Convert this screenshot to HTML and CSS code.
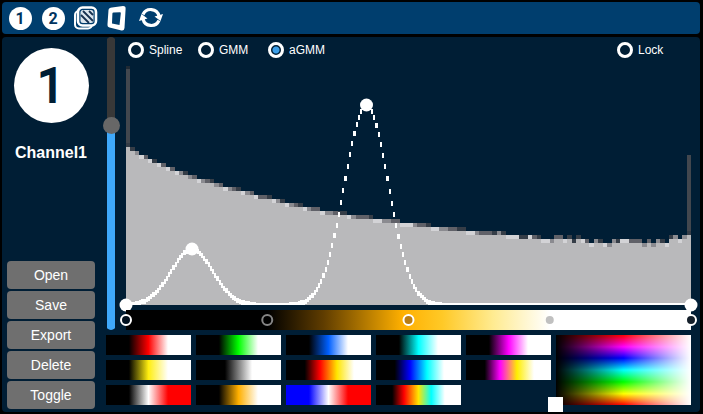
FILE: index.html
```html
<!DOCTYPE html>
<html lang="en">
<head>
<meta charset="utf-8">
<title>Transfer function editor</title>
<link rel="stylesheet" href="styles.css">
</head>
<body>
<header class="toolbar">
  <button class="tool" type="button"><span class="disc">1</span></button>
  <button class="tool" type="button"><span class="disc">2</span></button>
  <button class="tool" type="button" aria-label="Layers">
    <svg viewBox="0 0 24 24" width="24" height="24">
      <rect x="1" y="5" width="17" height="17.500" rx="4" fill="none" stroke="#fff" stroke-width="2"/>
      <rect x="4" y="1.500" width="18" height="18" rx="4.500" fill="#003c6c" stroke="#fff" stroke-width="2.600"/>
      <rect x="6.500" y="4" width="13" height="13" rx="2.500" fill="#dce5ed"/>
      <path d="M7 9L15 17M9 5L19 15M15 5L19 9" stroke="#17304f" stroke-width="1.800"/>
    </svg>
  </button>
  <button class="tool" type="button" aria-label="Clip plane">
    <svg viewBox="0 0 24 24" width="24" height="24">
      <path d="M5 1.500L16 0Q19 0 18.600 3L17.500 22Q17 25 14.500 24.500L2.500 21.500Q0.200 21 0.500 18L1.500 4Q1.800 1.700 5 1.500ZM6.500 6.500Q5.500 6.500 5.400 7.500L5 17.500L12.500 19L13.800 7.500Q14 6.300 13 6.300Z" fill="#fff" fill-rule="evenodd"/>
    </svg>
  </button>
  <button class="tool" type="button" aria-label="Refresh">
    <svg viewBox="0 0 24 24" width="24" height="24">
      <path d="M3 8.500A8.500 8.500 0 0 1 19 10M19 14.500A8.500 8.500 0 0 1 3 13" fill="none" stroke="#fff" stroke-width="3.200"/>
      <path d="M14.500 10.500L23 8L20.500 15ZM7.500 12.500L-1 15L1.500 8Z" fill="#fff"/>
    </svg>
  </button>
</header>

<main class="panel">
  <aside class="sidebar">
    <div class="badge">1</div>
    <h1 class="name">Channel1</h1>
    <div class="actions">
      <button type="button">Open</button>
      <button type="button">Save</button>
      <button type="button">Export</button>
      <button type="button">Delete</button>
      <button type="button">Toggle</button>
    </div>
  </aside>

  <section class="workspace">
    <div class="upper">
      <input class="slider" type="range" min="0" max="100" value="71" aria-label="Opacity">
      <div class="editor">
        <div class="modes">
          <label><input type="radio" name="mode">Spline</label>
          <label><input type="radio" name="mode">GMM</label>
          <label><input type="radio" name="mode" checked>aGMM</label>
          <label class="lock"><input type="checkbox">Lock</label>
        </div>
        <svg class="plot" viewBox="0 0 565 240" preserveAspectRatio="none">
          <defs><clipPath id="area"><rect width="565" height="240"/></clipPath></defs>
          <g id="bars" shape-rendering="crispEdges"></g>
          <g id="curve" fill="#fff" clip-path="url(#area)" shape-rendering="crispEdges"></g>
          <g fill="#fff">
            <circle cx="0" cy="240" r="6.500"/>
            <circle cx="66" cy="184" r="6.500"/>
            <circle cx="240.500" cy="40" r="6.500"/>
            <circle cx="565" cy="240" r="6.500"/>
          </g>
        </svg>
        <svg class="ramp" height="20">
          <defs>
            <linearGradient id="amber">
              <stop offset="0.250" stop-color="#000"/>
              <stop offset="0.350" stop-color="#603d00"/>
              <stop offset="0.490" stop-color="#ffb000"/>
              <stop offset="0.560" stop-color="#ffc927"/>
              <stop offset="0.650" stop-color="#ffeb91"/>
              <stop offset="0.750" stop-color="#fff"/>
            </linearGradient>
          </defs>
          <rect width="100%" height="20" fill="url(#amber)"/>
          <circle cx="0" cy="10" r="5" fill="#00101f" stroke="#fff" stroke-width="2"/>
          <circle cx="25%" cy="10" r="5" fill="#000" stroke="#858585" stroke-width="2"/>
          <circle cx="50%" cy="10" r="5" fill="#b97d14" stroke="#fff" stroke-width="2"/>
          <circle cx="75%" cy="10" r="4" fill="#c0c0c0"/>
          <circle cx="100%" cy="10" r="5" fill="#15202b" stroke="#fff" stroke-width="2"/>
        </svg>
      </div>
    </div>
    <div class="presets">
      <button type="button" class="red" aria-label="Red"></button>
      <button type="button" class="green" aria-label="Green"></button>
      <button type="button" class="blue" aria-label="Blue"></button>
      <button type="button" class="cyan" aria-label="Cyan"></button>
      <button type="button" class="magenta" aria-label="Magenta"></button>
      <div class="field"><span class="cursor"></span></div>
      <button type="button" class="yellow" aria-label="Yellow"></button>
      <button type="button" class="gray" aria-label="Gray"></button>
      <button type="button" class="fire" aria-label="Fire"></button>
      <button type="button" class="ice" aria-label="Ice"></button>
      <button type="button" class="plasma" aria-label="Plasma"></button>
      <button type="button" class="hot" aria-label="Gray to red"></button>
      <button type="button" class="orange" aria-label="Orange"></button>
      <button type="button" class="diverging" aria-label="Blue to red"></button>
      <button type="button" class="rainbow" aria-label="Rainbow"></button>
    </div>
  </section>
</main>
<script src="plot.js"></script>
</body>
</html>
```

FILE: styles.css
```css
* { box-sizing: border-box; }

body {
  margin: 0;
  min-height: 100vh;
  padding: 2px 3px 2px 2px;
  display: flex;
  flex-direction: column;
  gap: 3px;
  background: #000;
  color: #fff;
  font-family: "Liberation Sans", Arial, sans-serif;
}

button {
  margin: 0;
  padding: 0;
  border: 0;
  color: inherit;
  font: inherit;
}

.toolbar {
  height: 32px;
  padding: 0 6px;
  display: flex;
  align-items: center;
  gap: 9px;
  background: #003e6e;
  border-radius: 4px;
}

.tool {
  width: 24px;
  height: 24px;
  display: grid;
  place-items: center;
  background: none;
}

.tool svg {
  display: block;
  overflow: visible;
}

.disc {
  width: 23px;
  height: 23px;
  border-radius: 50%;
  background: #fff;
  color: #003460;
  font: 700 16px/24px Roboto, sans-serif;
}

.panel {
  flex: 1;
  display: flex;
  gap: 11px;
  padding: 0 9px 3px 5px;
  background: #001e35;
  border-radius: 4px;
}

.sidebar {
  width: 88px;
  display: flex;
  flex-direction: column;
}

.badge {
  width: 75px;
  height: 75px;
  margin: 11px auto 0;
  border-radius: 50%;
  background: #fff;
  color: #001e35;
  font: 400 48px/75px Roboto, sans-serif;
  -webkit-text-stroke: 2px #001e35;
  text-align: center;
}

.name {
  margin: 20px 0 0;
  font-size: 16px;
  line-height: 20px;
  text-align: center;
}

.actions {
  margin-top: auto;
  display: grid;
  gap: 2px;
}

.actions button {
  height: 28px;
  border-radius: 4px;
  background: #6f6f6f;
  font-size: 14px;
}

.workspace {
  flex: 1;
  display: flex;
  flex-direction: column;
  gap: 5px;
  padding-bottom: 4px;
}

.upper {
  flex: 1;
  display: flex;
  gap: 10px;
}

.slider {
  appearance: none;
  writing-mode: vertical-lr;
  direction: rtl;
  width: 10px;
  margin: 0;
  background: linear-gradient(#383838 30%, #3fa9fb 30%) center / 8px 100% no-repeat;
  border-radius: 5px;
}

.slider::-webkit-slider-thumb {
  appearance: none;
  width: 17px;
  height: 17px;
  border-radius: 50%;
  background: #676767;
}

.editor {
  flex: 1;
  min-width: 0;
  display: flex;
  flex-direction: column;
}

.modes {
  display: flex;
  height: 28px;
  padding-top: 5px;
  font-size: 12px;
}

.modes label {
  width: 70px;
  height: 16px;
  margin-left: 2px;
  margin-right: -2px;
  display: flex;
  align-items: center;
  gap: 5px;
}

.modes .lock {
  width: 76px;
  margin-left: auto;
}

.modes input {
  appearance: none;
  width: 16px;
  height: 16px;
  margin: 0;
  border: 3px solid #fff;
  border-radius: 50%;
}

.modes input:checked {
  background: radial-gradient(circle, #3d9fe8 3px, #001e35 4px);
}

.plot {
  display: block;
  width: 100%;
  height: 0;
  flex: 1;
  overflow: visible;
}

.ramp {
  display: block;
  width: 100%;
  margin-top: 5px;
  overflow: visible;
}

.presets {
  display: grid;
  grid-template-columns: repeat(5, 85fr) 135fr;
  grid-auto-rows: 20px;
  gap: 5px;
}

.field {
  position: relative;
  grid-column: 6;
  grid-row: 1 / 4;
  background:
    linear-gradient(90deg, #000, #0000 50%, #fff0 50%, #fff),
    linear-gradient(#f00, #f0f 17%, #00f 33%, #0ff 50%, #0f0 67%, #ff0 84%, #f00);
}

.cursor {
  position: absolute;
  left: -8px;
  bottom: -7px;
  width: 15px;
  height: 15px;
  background: #fff;
}

.red { background: linear-gradient(90deg, #000 27%, #f00 50%, #fff 73%); }
.green { background: linear-gradient(90deg, #000 27%, #0f0 50%, #fff 73%); }
.blue { background: linear-gradient(90deg, #000 27%, #0060ff 50%, #fff 73%); }
.cyan { background: linear-gradient(90deg, #000 27%, #0ff 50%, #fff 73%); }
.magenta { background: linear-gradient(90deg, #000 27%, #f0f 50%, #fff 73%); }
.yellow { background: linear-gradient(90deg, #000 27%, #ffee10 50%, #fff 73%); }
.gray { background: linear-gradient(90deg, #000 34%, #fff 66%); }
.fire { background: linear-gradient(90deg, #000 22%, #f00 40%, #ffe600 60%, #fff 80%); }
.ice { background: linear-gradient(90deg, #000 22%, #00f 40%, #0ff 60%, #fff 80%); }
.plasma { background: linear-gradient(90deg, #000 22%, #f0f 40%, #ffee00 60%, #fff 80%); }
.hot { background: linear-gradient(90deg, #000 27%, #fff 50%, #f00 73%); }
.orange { background: linear-gradient(90deg, #000 27%, #ffb000 50%, #fff 73%); }
.diverging { background: linear-gradient(90deg, #00f 27%, #fff 50%, #f00 73%); }
.rainbow { background: linear-gradient(90deg, #000 19%, #f00 33%, #ffe600 50%, #0ff 65%, #fff 81%); }
```

FILE: plot.js
```js
const NS = "http://www.w3.org/2000/svg";
const WIDTH = 565;
const HEIGHT = 240;
const CELL = 4;

function rect(parent, x, y, w, h, fill) {
  const r = document.createElementNS(NS, "rect");
  r.setAttribute("x", x);
  r.setAttribute("y", y);
  r.setAttribute("width", w);
  r.setAttribute("height", h);
  if (fill) r.setAttribute("fill", fill);
  parent.appendChild(r);
}

// Histogram envelope: [x, level] pairs, interpolated between.
const envelope = [[0, 82], [10, 89], [24, 96], [50, 107], [74, 115], [104, 124],
  [134, 132], [174, 142], [214, 150], [254, 155], [294, 161], [334, 166],
  [374, 170], [414, 173], [454, 176], [474, 177], [530, 177], [550, 174], [565, 170]];

function levelAt(x) {
  let i = 1;
  while (i < envelope.length - 1 && envelope[i][0] < x) i++;
  const [x0, y0] = envelope[i - 1];
  const [x1, y1] = envelope[i];
  return y0 + (y1 - y0) * (x - x0) / (x1 - x0);
}

const bars = document.getElementById("bars");
const bins = 128;
const step = WIDTH / bins;
rect(bars, 0, 1, 4, 90, "#42474e");
rect(bars, 0, 1, 4, 3, "#202a34");
rect(bars, 561, 90, 4, 90, "#42474e");

let outline = "M0 " + HEIGHT;
const caps = [];
for (let i = 0; i < bins; i++) {
  const x = i * step;
  const noise = Math.sin(i * 12.9898) * 43758.5453;
  const jitter = (noise - Math.floor(noise) - 0.5) * (x > 370 ? 5 : 1);
  const y = levelAt(x) + jitter;
  const row = Math.ceil((y - 2) / CELL) * CELL + 2;
  const fill = row - y;
  const shade = fill < 1 ? "#353d47" : fill < 2 ? "#606168" : fill < 3 ? "#8b8b90" : "#d3d3d6";
  caps.push([x, row - CELL, shade]);
  outline += "V" + row + "H" + (x + step);
}
const fillPath = document.createElementNS(NS, "path");
fillPath.setAttribute("d", outline + "V" + HEIGHT + "Z");
fillPath.setAttribute("fill", "#b9b9bb");
bars.appendChild(fillPath);
for (const [x, y, shade] of caps) rect(bars, x, y, step, CELL, shade);

// Sum of two Gaussians, one mark per sample.
const peaks = [[66, 56, 21], [240.5, 200, 22]];
const curve = document.getElementById("curve");
const samples = 256;
const dx = WIDTH / samples;
for (let i = 0; i < samples; i++) {
  const x = (i + 0.5) * dx;
  let v = 0;
  for (const [mean, amp, sigma] of peaks) {
    v += amp * Math.exp(-((x - mean) ** 2) / (2 * sigma * sigma));
  }
  rect(curve, i * dx, HEIGHT - v - 2, dx, 5);
}
```
